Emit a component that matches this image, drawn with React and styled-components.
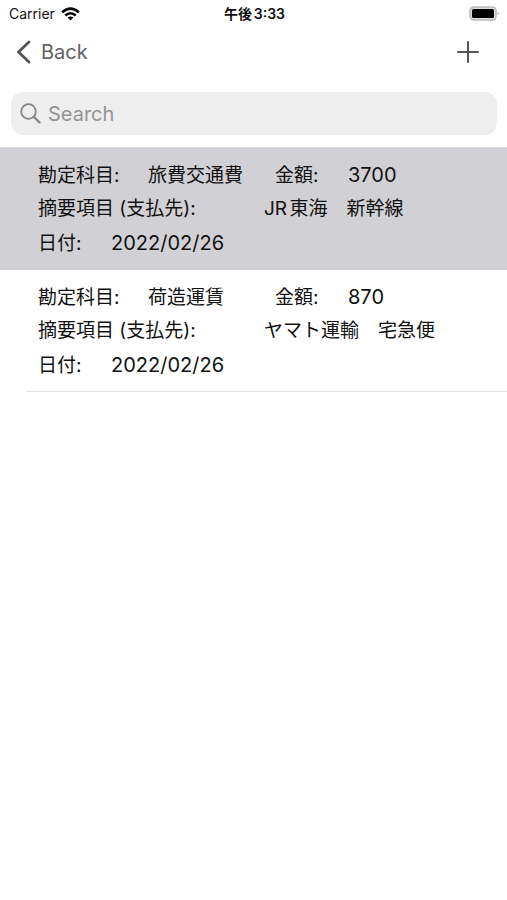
import styled, { createGlobalStyle } from "styled-components";

const GlobalStyle = createGlobalStyle`
  * {
    box-sizing: border-box;
  }
  body {
    margin: 0;
    background: #fff;
    color: #111;
    font-family: Inter, "Noto Sans CJK JP", sans-serif;
    text-autospace: normal;
  }
  button,
  input {
    font: inherit;
  }
`;

const StatusBar = styled.header`
  display: grid;
  grid-template-columns: 1fr auto 1fr;
  align-items: center;
  height: 28px;
  padding: 0 7px 0 9px;
  font-size: 14px;
  line-height: 20px;

  time {
    font-weight: 600;
  }
`;

const Carrier = styled.div`
  display: flex;
  align-items: center;
  gap: 6px;
`;

const Battery = styled.svg`
  justify-self: end;
`;

const NavBar = styled.nav`
  display: flex;
  align-items: center;
  justify-content: space-between;
  height: 48px;
  padding: 0 28px 0 16px;
`;

const NavButton = styled.button`
  display: flex;
  align-items: center;
  gap: 10px;
  padding: 0;
  border: 0;
  background: none;
  color: #626262;
  font-size: 20px;
  line-height: 24px;
  cursor: pointer;
`;

const SearchBox = styled.label`
  display: flex;
  align-items: center;
  gap: 7px;
  height: 43px;
  margin: 16px 10px 12px 11px;
  padding: 0 9px;
  border-radius: 12px;
  background: #eee;
`;

const SearchInput = styled.input`
  flex: 1;
  min-width: 0;
  padding: 0;
  border: 0;
  outline: 0;
  background: none;
  color: #111;
  font-size: 20px;
  line-height: 24px;

  &::placeholder {
    color: #939395;
    opacity: 1;
  }
`;

const List = styled.ul`
  margin: 0;
  padding: 0;
  border-top: 1px solid #dcdcdf;
  list-style: none;
`;

const Item = styled.li`
  padding-left: 26px;
  background: ${(props) => (props.$selected ? "#d1d0d5" : "#fff")};
`;

const Entry = styled.dl`
  margin: 0;
  padding: 10px 12px 9px;
  border-bottom: 1px solid ${(props) => (props.$selected ? "#d1d0d5" : "#e2e2e4")};
`;

const Line = styled.div`
  display: grid;
  grid-template-columns: ${(props) => props.$columns};
  align-items: baseline;
  height: 34px;
  font-size: 19px;
  line-height: 34px;
  white-space: nowrap;

  dd {
    margin: 0;
  }
`;

const Figure = styled.dd`
  font-size: 20px;
`;

const entries = [
  {
    account: "旅費交通費",
    amount: "3700",
    payee: "JR東海　新幹線",
    date: "2022/02/26",
    selected: true,
  },
  {
    account: "荷造運賃",
    amount: "870",
    payee: "ヤマト運輸　宅急便",
    date: "2022/02/26",
    selected: false,
  },
];

export default function App() {
  return (
    <>
      <GlobalStyle />
      <StatusBar>
        <Carrier>
          <span>Carrier</span>
          <svg width="19" height="14" viewBox="0 0 19 14" aria-hidden="true">
            <g fill="none" stroke="#000" strokeWidth="2.6">
              <path d="M1.2 5.2Q9.5 -2 17.8 5.2" />
              <path d="M4.3 8.5Q9.5 4 14.7 8.5" />
            </g>
            <path d="M6.6 10.6Q9.5 8.4 12.4 10.6L9.5 13.6Z" />
          </svg>
        </Carrier>
        <time>午後3:33</time>
        <Battery width="31" height="16" viewBox="0 0 31 16" aria-hidden="true">
          <rect x="1" y="1" width="26" height="13" rx="4" fill="#ddd" stroke="#bbb" strokeWidth="1.6" />
          <rect x="3" y="3" width="22" height="9" rx="1.5" />
          <path d="M28.6 5.5Q31 7.5 28.6 9.5Z" fill="#aaa" />
        </Battery>
      </StatusBar>
      <NavBar>
        <NavButton type="button">
          <svg width="15" height="24" viewBox="0 0 15 24" aria-hidden="true">
            <path
              d="M13 2L2.5 12L13 22"
              fill="none"
              stroke="#555"
              strokeWidth="2.8"
              strokeLinecap="round"
              strokeLinejoin="round"
            />
          </svg>
          Back
        </NavButton>
        <NavButton type="button" aria-label="Add">
          <svg width="22" height="22" viewBox="0 0 22 22" aria-hidden="true">
            <path d="M11 1V21M1 11H21" stroke="#555" strokeWidth="2" strokeLinecap="round" />
          </svg>
        </NavButton>
      </NavBar>
      <SearchBox>
        <svg width="21" height="21" viewBox="0 0 21 21" aria-hidden="true">
          <g fill="none" stroke="#858587" strokeLinecap="round">
            <circle cx="8.5" cy="8.5" r="7.3" strokeWidth="1.8" />
            <path d="M14 14L19.5 19.5" strokeWidth="2.4" />
          </g>
        </svg>
        <SearchInput type="search" placeholder="Search" aria-label="Search" />
      </SearchBox>
      <List>
        {entries.map((entry) => (
          <Item key={entry.account} $selected={entry.selected}>
            <Entry $selected={entry.selected}>
              <Line $columns="110px 127px 73px 1fr">
                <dt>勘定科目:</dt>
                <dd>{entry.account}</dd>
                <dt>金額:</dt>
                <Figure>{entry.amount}</Figure>
              </Line>
              <Line $columns="226px 1fr">
                <dt>摘要項目 (支払先):</dt>
                <dd>{entry.payee}</dd>
              </Line>
              <Line $columns="73px 1fr">
                <dt>日付:</dt>
                <Figure>{entry.date}</Figure>
              </Line>
            </Entry>
          </Item>
        ))}
      </List>
    </>
  );
}
